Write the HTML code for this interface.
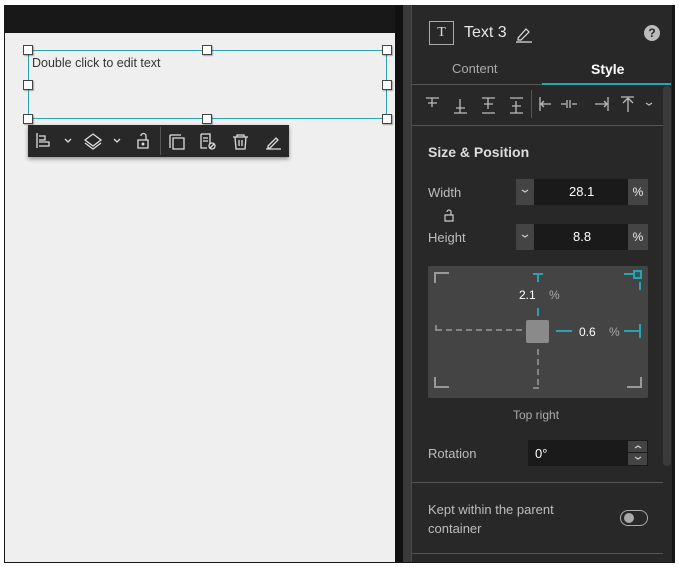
<!DOCTYPE html>
<html><head><meta charset="utf-8"><style>
*{margin:0;padding:0;box-sizing:border-box}
body{width:679px;height:567px;background:#fff;position:relative;overflow:hidden;font-family:"Liberation Sans",sans-serif}
.a{position:absolute}
.h{position:absolute;width:10px;height:10px;background:#fff;border:1px solid #444;box-shadow:1px 1px 1px rgba(0,0,0,.3)}
.t{color:#bdbdbd;font-size:13px;position:absolute}
svg{position:absolute;overflow:visible}
</style></head><body>
<div class="a" style="left:4px;top:5px;width:671px;height:558px;background:#181818"></div>
<div class="a" style="left:5px;top:33px;width:390px;height:529px;background:#efefef"></div>
<div class="a" style="left:395px;top:5px;width:8px;height:557px;background:#111"></div>
<div class="a" style="left:403px;top:5px;width:8px;height:557px;background:#3a3a3a"></div>
<div class="a" style="left:411px;top:5px;width:1px;height:557px;background:#4a4a4a"></div>
<div class="a" style="left:412px;top:5px;width:260px;height:557px;background:#282828"></div>
<div class="a" style="left:672px;top:5px;width:3px;height:557px;background:#161616"></div>

<div class="a" style="left:28px;top:50px;width:359px;height:69px;border:1px solid #2aa3b0"></div>
<div class="a" style="left:32px;top:56px;font-size:12.5px;color:#333">Double click to edit text</div>
<div class="h" style="left:23px;top:45px"></div><div class="h" style="left:202px;top:45px"></div><div class="h" style="left:382px;top:45px"></div>
<div class="h" style="left:23px;top:80px"></div><div class="h" style="left:382px;top:80px"></div>
<div class="h" style="left:23px;top:114px"></div><div class="h" style="left:202px;top:114px"></div><div class="h" style="left:382px;top:114px"></div>
<div class="a" style="left:28px;top:125px;width:261px;height:32px;background:#282828;box-shadow:0 2px 4px rgba(0,0,0,.4)"></div>
<div class="a" style="left:160px;top:127px;width:1px;height:28px;background:#555"></div>
<svg style="left:0;top:0" width="679" height="567" fill="none" stroke="#ddd" stroke-width="1.3">
<path d="M37 133v15M39 136h6v4h-6M39 142h10v4h-10"/>
<path d="M65 139l3 3 3-3M114 139l3 3 3-3"/>
<path d="M93 134l8 6-8 6-8-6z M85 143l8 6 8-6"/>
<path d="M138 140h10v8h-10z M146 140v-4a2.5 2.5 0 0 0-5 0"/><circle cx="143" cy="144" r=".8" fill="#ddd"/>
<path d="M170 135v13M170 135h11M173 138h11v11h-11z"/>
<path d="M201 134h9v10M201 134v14h6M203 138h5M203 141h5"/><circle cx="212" cy="146" r="3"/><path d="M210 148l4-4"/>
<path d="M233 137h15M237 137v-2h7v2M235 137l1 12h9l1-12M239 140v6M242 140v6"/>
<path d="M266 149h15M268 146l8-8 2 2-8 8h-2z"/>
</svg>

<div class="a" style="left:429px;top:21px;width:25px;height:24px;border:1px solid #aaa;color:#ddd;font-family:'Liberation Serif',serif;font-size:14px;text-align:center;line-height:22px">T</div>
<div class="a" style="left:464px;top:24px;font-size:16px;color:#e6e6e6">Text 3</div>
<svg style="left:0;top:0" width="679" height="567" fill="none" stroke="#ddd" stroke-width="1.2"><path d="M516 42h16M518 38l8-9 3 3-8 8h-3z"/></svg>
<div class="a" style="left:644px;top:25px;width:16px;height:16px;border-radius:50%;background:#bbb;color:#282828;font-size:12px;font-weight:bold;text-align:center;line-height:16px">?</div>
<div class="t" style="left:452px;top:61px;color:#aaa">Content</div>
<div class="t" style="left:591px;top:61px;color:#fff;font-weight:bold;font-size:14px">Style</div>
<div class="a" style="left:412px;top:84px;width:130px;height:1px;background:#555"></div>
<div class="a" style="left:542px;top:83px;width:129px;height:2px;background:#2aa3b0"></div>
<div class="a" style="left:663px;top:86px;width:8px;height:380px;background:#3a3a3a;border-radius:4px"></div>
<svg style="left:0;top:0" width="679" height="567" fill="none" stroke="#bbb" stroke-width="1.3">
<path d="M426 98h13M428 103h9M432 98v9"/>
<path d="M454 113h13M456 108h9M460 99v14"/>
<path d="M482 98h13M482 113h13M484 104h9M488 98v11"/>
<path d="M510 98h13M510 113h13M512 106h9M516 101v12"/>
<path d="M540 97v14M541 104h10M541 104l3-3M541 104l3 3"/>
<path d="M567 100v8M570 100v8M561 104h5M572 104h5"/>
<path d="M608 97v14M595 104h12M607 104l-3-3M607 104l-3 3"/>
<path d="M621 97h13M628 98v14M628 98l-5 5M628 98l5 5"/>
<path d="M646 103l3 2 3-2"/>
</svg>
<div class="a" style="left:531px;top:90px;width:1px;height:28px;background:#555"></div>
<div class="a" style="left:412px;top:125px;width:251px;height:1px;background:#555"></div>

<div class="a" style="left:428px;top:144px;font-size:14px;color:#ddd;font-weight:bold">Size &amp; Position</div>
<div class="t" style="left:428px;top:185px">Width</div>
<div class="a" style="left:516px;top:179px;width:132px;height:26px;background:#1a1a1a"></div>
<div class="a" style="left:516px;top:179px;width:18px;height:26px;background:#444"></div>
<div class="a" style="left:628px;top:179px;width:20px;height:26px;background:#444;color:#eee;font-size:12px;text-align:center;line-height:26px">%</div>
<div class="a" style="left:569px;top:184px;color:#fff;font-size:13px">28.1</div>
<div class="t" style="left:428px;top:230px">Height</div>
<div class="a" style="left:516px;top:224px;width:132px;height:26px;background:#1a1a1a"></div>
<div class="a" style="left:516px;top:224px;width:18px;height:26px;background:#444"></div>
<div class="a" style="left:628px;top:224px;width:20px;height:26px;background:#444;color:#eee;font-size:12px;text-align:center;line-height:26px">%</div>
<div class="a" style="left:573px;top:229px;color:#fff;font-size:13px">8.8</div>
<svg style="left:0;top:0" width="679" height="567" fill="none" stroke="#ccc" stroke-width="1.2">
<path d="M522 190l3 2 3-2M522 235l3 2 3-2"/>
<path d="M445 215h8v6h-8zM451 215v-3a2 2 0 0 0-4 0"/>
</svg>
<div class="a" style="left:428px;top:266px;width:220px;height:132px;background:#444;border-radius:2px"></div>
<svg style="left:0;top:0" width="679" height="567" fill="none" stroke-width="2">
<g stroke="#999"><path d="M435 283v-10h14M435 377v10h14M641 377v10h-14"/>
<path d="M436 325v10M436 330h88" stroke-dasharray="6 4" stroke-width="1.5"/>
<path d="M538 349v38M533 388h10" stroke-dasharray="6 4" stroke-width="1.5"/></g>
<g stroke="#2aa3b0"><path d="M533 274h10M538 274v8M538 308v8M556 331h16M624 331h16M640 324v14M624 274h10M640 282v8"/>
<rect x="634" y="271" width="7" height="7" fill="#2a5a60"/></g>
<rect x="526" y="320" width="23" height="23" rx="2" fill="#8a8a8a" stroke="none"/>
</svg>
<div class="a" style="left:519px;top:288px;color:#fff;font-size:12px">2.1</div>
<div class="a" style="left:549px;top:288px;color:#aaa;font-size:12px">%</div>
<div class="a" style="left:579px;top:325px;color:#fff;font-size:12px">0.6</div>
<div class="a" style="left:609px;top:325px;color:#aaa;font-size:12px">%</div>
<div class="a" style="left:513px;top:408px;color:#aaa;font-size:12px">Top right</div>

<div class="t" style="left:428px;top:446px">Rotation</div>
<div class="a" style="left:528px;top:440px;width:120px;height:26px;background:#1a1a1a"></div>
<div class="a" style="left:628px;top:441px;width:19px;height:11px;background:#444"></div>
<div class="a" style="left:628px;top:453px;width:19px;height:12px;background:#444"></div>
<svg style="left:0;top:0" width="679" height="567" fill="none" stroke="#ccc" stroke-width="1.2"><path d="M635 448l3-2 3 2M635 457l3 2 3-2"/></svg>
<div class="a" style="left:535px;top:446px;color:#fff;font-size:13px">0°</div>
<div class="a" style="left:412px;top:482px;width:251px;height:1px;background:#555"></div>
<div class="t" style="left:428px;top:500px;line-height:19px">Kept within the parent<br>container</div>
<div class="a" style="left:620px;top:510px;width:28px;height:16px;border:1.5px solid #aaa;border-radius:8px"></div>
<div class="a" style="left:624px;top:513px;width:10px;height:10px;border-radius:50%;background:#aaa"></div>
<div class="a" style="left:412px;top:553px;width:251px;height:1px;background:#555"></div>
</body></html>
